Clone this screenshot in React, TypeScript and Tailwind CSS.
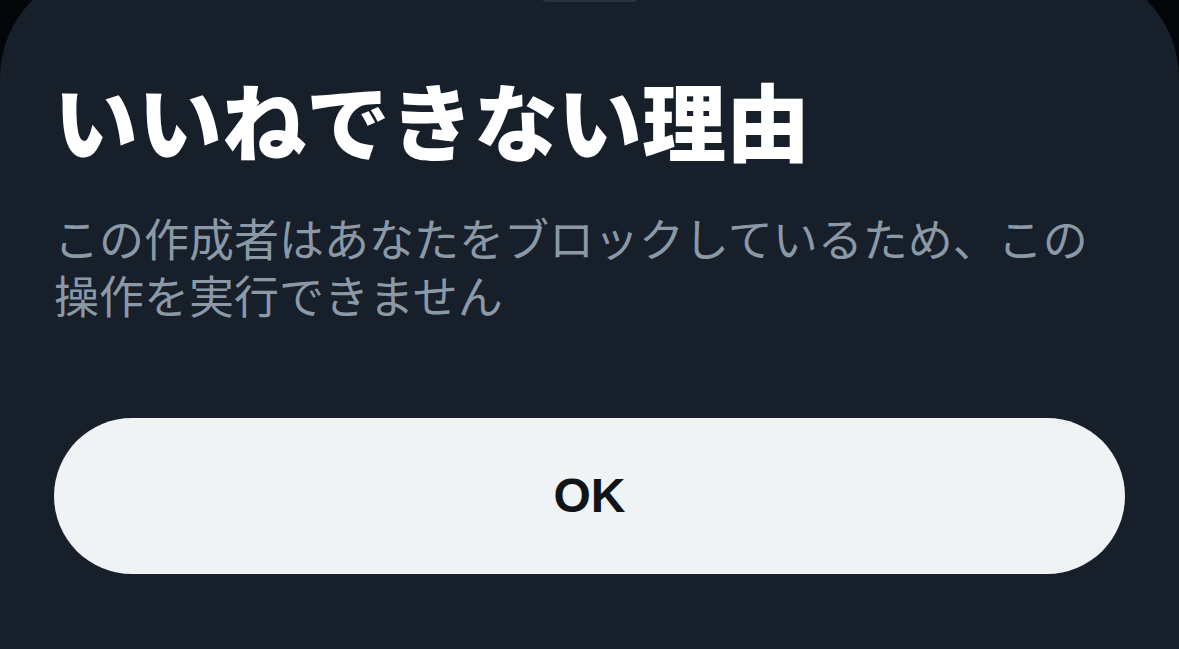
import React from 'react';

const jp = { fontFamily: '"Noto Sans CJK JP", "Noto Sans", sans-serif' };

export default function App() {
  return (
    <div className="w-[1179px] h-[649px] overflow-hidden bg-[#04070a]" style={jp}>
      <div className="-mt-[32px] h-[700px] rounded-t-[110px] bg-[#161f2a] px-[54px] pt-[26px]">
        <div className="mx-auto h-[8px] w-[95px] rounded-full bg-[#253342]" />
        <h1 className="mt-[66px] text-[84px] font-black leading-[101px] text-white">
          いいねできない理由
        </h1>
        <p className="mt-[40px] text-[45px] leading-[57px] text-[#8b98a5]">
          この作成者はあなたをブロックしているため、この操作を実行できません
        </p>
        <button
          className="mt-[95px] flex h-[156px] w-full items-center justify-center rounded-full bg-[#eff3f4] text-[48px] font-bold text-[#0f1419]"
          style={{ fontFamily: '"Liberation Sans", Roboto, sans-serif' }}
        >
          OK
        </button>
      </div>
    </div>
  );
}
